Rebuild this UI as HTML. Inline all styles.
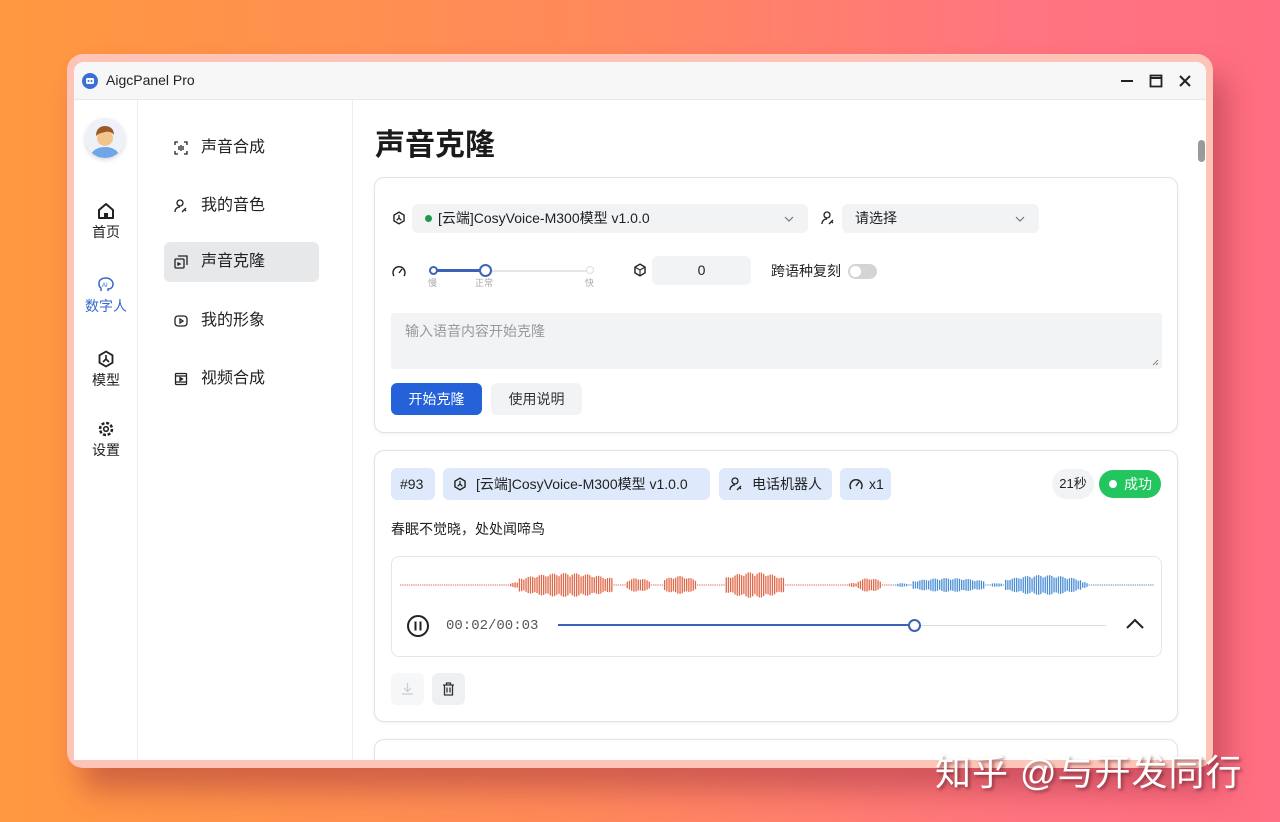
<!DOCTYPE html>
<html><head><meta charset="utf-8">
<style>
*{box-sizing:border-box;margin:0;padding:0}
body{width:1280px;height:822px;overflow:hidden;position:relative;font-family:"Liberation Sans","Noto Sans CJK SC",sans-serif;background:linear-gradient(90deg,#ff9840 0%,#ff8a5a 45%,#ff7480 80%,#ff6e82 100%);color:#222}
.frame{position:absolute;left:67px;top:54px;width:1146px;height:714px;border-radius:16px;background:#ffc4b8;box-shadow:14px 22px 30px rgba(150,40,60,.45)}
.win{position:absolute;left:74px;top:62px;width:1132px;height:698px;background:#fff;border-radius:10px 10px 0 0;overflow:hidden}
.title{position:absolute;left:0;top:0;width:100%;height:38px;background:#f7f7f8;border-bottom:1px solid #e8e8e8}
.title .name{position:absolute;left:32px;top:10px;font-size:14px;color:#222}
.rail{position:absolute;left:0;top:38px;width:64px;bottom:0;border-right:1px solid #ececec}
.rail .it{position:absolute;width:64px;text-align:center;font-size:14px;color:#222}
.rail svg{display:block;margin:0 auto 2px}
.side{position:absolute;left:64px;top:38px;width:215px;bottom:0;border-right:1px solid #ececec}
.side .m{position:absolute;left:26px;width:155px;height:40px;border-radius:6px;font-size:16px;line-height:40px;padding-left:37px;color:#222}
.side .m svg{position:absolute;left:10px;top:13px}
.side .m.on{background:#e7e8ea}
.main{position:absolute;left:279px;top:38px;right:0;bottom:0}
h1{position:absolute;left:22px;top:20px;font-size:30px;font-weight:700;color:#1a1a1a}
.card{position:absolute;left:21px;width:804px;border:1px solid #e3e3e3;border-radius:10px;background:#fff;box-shadow:0 1px 3px rgba(0,0,0,.06)}
.sel{position:absolute;height:29px;background:#f2f3f5;border-radius:6px;font-size:14px;line-height:29px;color:#222}
.tag{position:absolute;top:17px;height:32px;background:#deeafb;border-radius:6px;font-size:14px;line-height:32px;padding:0 9px;color:#222;white-space:nowrap}
.ic{position:absolute}
.sb{position:absolute;right:1px;top:40px;width:7px;height:22px;background:#9a9a9a;border-radius:4px}
.wm{position:absolute;left:935px;top:744px;font-size:36px;color:#fff;text-shadow:2px 2px 3px rgba(90,30,40,.6);letter-spacing:1px}
</style></head><body>
<div class="frame"></div>
<div class="win">
 <div class="title">
  <svg style="position:absolute;left:8px;top:11px" width="16" height="16" viewBox="0 0 16 16"><circle cx="8" cy="8" r="8" fill="#3b6fd8"/><rect x="4" y="5" width="8" height="6" rx="1.5" fill="#fff"/><circle cx="6.5" cy="8" r="1" fill="#3b6fd8"/><circle cx="9.5" cy="8" r="1" fill="#3b6fd8"/></svg>
  <div class="name">AigcPanel Pro</div>
  <svg style="position:absolute;left:1046px;top:12px" width="14" height="14"><line x1="1" y1="7" x2="13" y2="7" stroke="#222" stroke-width="2"/></svg>
  <svg style="position:absolute;left:1075px;top:12px" width="14" height="14"><rect x="1.5" y="1.5" width="11" height="11" fill="none" stroke="#222" stroke-width="1.8"/><line x1="1" y1="4" x2="13" y2="4" stroke="#222" stroke-width="2"/></svg>
  <svg style="position:absolute;left:1104px;top:12px" width="14" height="14"><path d="M2 2L12 12M12 2L2 12" stroke="#222" stroke-width="2"/></svg>
 </div>
 <div class="rail">
  <div style="position:absolute;left:11px;top:18px;width:40px;height:40px;border-radius:50%;background:#eef2f8;box-shadow:0 2px 5px rgba(0,0,0,.15);overflow:hidden">
   <svg width="40" height="40" viewBox="0 0 40 40"><ellipse cx="20" cy="38" rx="14" ry="9" fill="#6fa6e8"/><circle cx="20" cy="20" r="8" fill="#f3c58c"/><path d="M11 18c0-7 4-10 9-10s9 3 9 9c-2-3-6-4-9-3-3 1-6 1-9 4z" fill="#9a5a2a"/></svg>
  </div>
  <div class="it" style="top:102px"><svg width="18" height="18" viewBox="0 0 18 18"><path d="M2 8L9 2l7 6v8H2z" fill="none" stroke="#222" stroke-width="2" stroke-linejoin="round"/><rect x="7" y="11" width="4" height="5" fill="#222"/></svg>首页</div>
  <div class="it" style="top:176px;color:#3568cc"><svg width="18" height="18" viewBox="0 0 18 18"><path d="M4 15v-3c-2-1-2-3-2-5 0-3 3-5 7-5s7 3 7 6c0 4-3 5-5 5v2" fill="none" stroke="#3568cc" stroke-width="1.5"/><text x="5" y="11" font-size="6" fill="#3568cc" font-family="Liberation Sans">AI</text></svg>数字人</div>
  <div class="it" style="top:250px"><svg width="18" height="18" viewBox="0 0 18 18"><path d="M9 1.5l6.5 3.8v7.4L9 16.5 2.5 12.7V5.3z" fill="none" stroke="#222" stroke-width="1.8"/><path d="M9 5v4l-3 3M9 9l3 3" stroke="#222" stroke-width="1.6" fill="none"/></svg>模型</div>
  <div class="it" style="top:320px"><svg width="18" height="18" viewBox="0 0 18 18"><circle cx="9" cy="9" r="6" fill="none" stroke="#222" stroke-width="2.5" stroke-dasharray="3 1.7"/><circle cx="9" cy="9" r="2.3" fill="none" stroke="#222" stroke-width="1.6"/></svg>设置</div>
 </div>
 <div class="side">
  <div class="m" style="top:28px"><svg width="14" height="14" viewBox="0 0 14 14" fill="none" stroke="#222" stroke-width="1.3"><path d="M1 4V1h3M10 1h3v3M13 10v3h-3M4 13H1v-3"/><path d="M5 5v4M7 4v6M9 5v4"/></svg>声音合成</div>
  <div class="m" style="top:86px"><svg width="14" height="14" viewBox="0 0 14 14" fill="none" stroke="#222" stroke-width="1.3"><circle cx="6" cy="4" r="3"/><path d="M1 13c0-3 2-5 5-5M8 13l4-4M10 10l2 2"/></svg>我的音色</div>
  <div class="m on" style="top:142px"><svg width="14" height="14" viewBox="0 0 14 14" fill="none" stroke="#222" stroke-width="1.3"><rect x="1" y="4" width="9" height="9" rx="1"/><path d="M4 1h9v9"/><path d="M4 8l2 1-2 1z" fill="#222"/></svg>声音克隆</div>
  <div class="m" style="top:201px"><svg width="14" height="14" viewBox="0 0 14 14" fill="none" stroke="#222" stroke-width="1.3"><rect x="1" y="2" width="12" height="10" rx="3"/><path d="M6 5l3 2-3 2z"/></svg>我的形象</div>
  <div class="m" style="top:259px"><svg width="14" height="14" viewBox="0 0 14 14" fill="none" stroke="#222" stroke-width="1.3"><rect x="1.5" y="1.5" width="11" height="11" rx="1"/><path d="M1.5 4h11M1.5 10h11"/><path d="M6 5.5l2.5 1.5L6 8.5z" fill="#222"/></svg>视频合成</div>
 </div>
 <div class="main">
  <h1>声音克隆</h1>
  <div class="card" style="top:77px;height:256px">
   <svg class="ic" style="left:17px;top:33px" width="14" height="14" viewBox="0 0 18 18"><path d="M9 1.5l6.5 3.8v7.4L9 16.5 2.5 12.7V5.3z" fill="none" stroke="#222" stroke-width="1.8"/><path d="M9 5v4l-3 3M9 9l3 3" stroke="#222" stroke-width="1.6" fill="none"/></svg>
   <div class="sel" style="left:37px;top:26px;width:396px;padding-left:26px"><span style="position:absolute;left:13px;top:11px;width:7px;height:7px;border-radius:50%;background:#1e9b4a"></span>[云端]CosyVoice-M300模型 v1.0.0<svg style="position:absolute;right:14px;top:11px" width="10" height="8"><path d="M1 2l4 4 4-4" fill="none" stroke="#777" stroke-width="1.2"/></svg></div>
   <svg class="ic" style="left:446px;top:33px" width="14" height="14" viewBox="0 0 14 14" fill="none" stroke="#222" stroke-width="1.3"><circle cx="6" cy="4" r="3"/><path d="M1 13c0-3 2-5 5-5M8 13l4-4M10 10l2 2"/></svg>
   <div class="sel" style="left:467px;top:26px;width:197px;padding-left:13px">请选择<svg style="position:absolute;right:14px;top:11px" width="10" height="8"><path d="M1 2l4 4 4-4" fill="none" stroke="#777" stroke-width="1.2"/></svg></div>
   <svg class="ic" style="left:17px;top:86px" width="14" height="14" viewBox="0 0 14 14" fill="none" stroke="#222" stroke-width="1.4"><path d="M2 12A6 6 0 1 1 12 12"/><path d="M7 9l3-4"/></svg>
   <div style="position:absolute;left:58px;top:92px;width:158px;height:2px;background:#e6e6e6"></div>
   <div style="position:absolute;left:58px;top:91px;width:52px;height:3px;background:#3a63b8"></div>
   <div style="position:absolute;left:54px;top:88px;width:9px;height:9px;border-radius:50%;border:2px solid #3a63b8;background:#fff"></div>
   <div style="position:absolute;left:104px;top:86px;width:13px;height:13px;border-radius:50%;border:2px solid #3a63b8;background:#fff"></div>
   <div style="position:absolute;left:211px;top:88px;width:8px;height:8px;border-radius:50%;border:1px solid #ddd;background:#fff"></div>
   <div style="position:absolute;left:53px;top:98px;font-size:9px;color:#aaa">慢</div>
   <div style="position:absolute;left:100px;top:98px;font-size:9px;color:#aaa">正常</div>
   <div style="position:absolute;left:210px;top:98px;font-size:9px;color:#aaa">快</div>
   <svg class="ic" style="left:258px;top:85px" width="14" height="14" viewBox="0 0 18 18"><path d="M9 1.5l6.5 3.8v7.4L9 16.5 2.5 12.7V5.3z" fill="none" stroke="#222" stroke-width="1.8"/><path d="M2.5 5.3L9 9l6.5-3.7M9 9v7" stroke="#222" stroke-width="1.4" fill="none"/></svg>
   <div class="sel" style="left:277px;top:78px;width:99px;text-align:center">0</div>
   <div style="position:absolute;left:396px;top:83px;font-size:14px">跨语种复刻</div>
   <div style="position:absolute;left:473px;top:86px;width:29px;height:15px;border-radius:8px;background:#d4d4d6"><div style="position:absolute;left:2px;top:2px;width:11px;height:11px;border-radius:50%;background:#fff"></div></div>
   <div style="position:absolute;left:16px;top:135px;width:771px;height:56px;background:#f2f3f5;border-radius:3px;font-size:14px;color:#999;padding:8px 14px">输入语音内容开始克隆<svg style="position:absolute;right:3px;bottom:3px" width="7" height="7"><path d="M6 1L1 6M6 4L4 6" stroke="#888"/></svg></div>
   <div style="position:absolute;left:16px;top:205px;width:91px;height:32px;background:#2562d9;border-radius:6px;color:#fff;font-size:14px;line-height:32px;text-align:center">开始克隆</div>
   <div style="position:absolute;left:116px;top:205px;width:91px;height:32px;background:#f2f3f5;border-radius:6px;color:#333;font-size:14px;line-height:32px;text-align:center">使用说明</div>
  </div>
  <div class="card" style="top:350px;height:272px">
   <div class="tag" style="left:16px;width:44px">#93</div>
   <div class="tag" style="left:68px;width:267px;padding-left:33px"><svg style="position:absolute;left:10px;top:9px" width="14" height="14" viewBox="0 0 18 18"><path d="M9 1.5l6.5 3.8v7.4L9 16.5 2.5 12.7V5.3z" fill="none" stroke="#222" stroke-width="1.8"/><path d="M9 5v4l-3 3M9 9l3 3" stroke="#222" stroke-width="1.6" fill="none"/></svg>[云端]CosyVoice-M300模型 v1.0.0</div>
   <div class="tag" style="left:344px;width:113px;padding-left:33px"><svg style="position:absolute;left:10px;top:9px" width="14" height="14" viewBox="0 0 14 14" fill="none" stroke="#222" stroke-width="1.3"><circle cx="6" cy="4" r="3"/><path d="M1 13c0-3 2-5 5-5M8 13l4-4M10 10l2 2"/></svg>电话机器人</div>
   <div class="tag" style="left:465px;width:51px;padding-left:29px"><svg style="position:absolute;left:9px;top:9px" width="14" height="14" viewBox="0 0 14 14" fill="none" stroke="#222" stroke-width="1.4"><path d="M2 12A6 6 0 1 1 12 12"/><path d="M7 9l3-4"/></svg>x1</div>
   <div style="position:absolute;left:677px;top:18px;width:42px;height:30px;border-radius:15px;background:#f2f3f5;font-size:13px;line-height:30px;text-align:center">21秒</div>
   <div style="position:absolute;left:724px;top:19px;width:62px;height:28px;border-radius:14px;background:#22c55e;color:#fff;font-size:14px;line-height:28px;padding-left:25px"><span style="position:absolute;left:10px;top:10px;width:8px;height:8px;border-radius:50%;background:#fff"></span>成功</div>
   <div style="position:absolute;left:16px;top:68px;font-size:14px">春眠不觉晓，处处闻啼鸟</div>
   <div style="position:absolute;left:16px;top:105px;width:771px;height:101px;border:1px solid #e6e6e6;border-radius:8px">
    <svg id="wave" style="position:absolute;left:0;top:8px" width="769" height="40"></svg>
    <svg style="position:absolute;left:14px;top:57px" width="24" height="24"><circle cx="12" cy="12" r="10" fill="none" stroke="#222" stroke-width="2"/><rect x="8.5" y="7.5" width="2" height="9" fill="#222"/><rect x="13.5" y="7.5" width="2" height="9" fill="#222"/></svg>
    <div style="position:absolute;left:54px;top:61px;font-family:'Liberation Mono',monospace;font-size:14px;color:#555">00:02/00:03</div>
    <div style="position:absolute;left:166px;top:68px;width:548px;height:1px;background:#ddd"></div>
    <div style="position:absolute;left:166px;top:67px;width:356px;height:2px;background:#3a63b8"></div>
    <div style="position:absolute;left:516px;top:62px;width:13px;height:13px;border-radius:50%;border:2px solid #3a63b8;background:#fff"></div>
    <svg style="position:absolute;left:733px;top:60px" width="20" height="14"><path d="M2 11l8-8 8 8" fill="none" stroke="#222" stroke-width="2"/></svg>
   </div>
   <div style="position:absolute;left:16px;top:222px;width:33px;height:32px;border-radius:6px;background:#f6f7f8"><svg style="position:absolute;left:10px;top:9px" width="13" height="13"><path d="M6.5 1v8M3 6l3.5 3.5L10 6M1 12h11" fill="none" stroke="#ccc" stroke-width="1.2"/></svg></div>
   <div style="position:absolute;left:57px;top:222px;width:33px;height:32px;border-radius:6px;background:#eef0f2"><svg style="position:absolute;left:10px;top:9px" width="13" height="14"><path d="M1 3h11M4.5 3V1h4v2M2.5 3v10h8V3M5 5.5v5M8 5.5v5" fill="none" stroke="#333" stroke-width="1.3"/></svg></div>
  </div>
  <div class="card" style="top:639px;height:80px"></div>
  <div class="sb"></div>
 </div>
</div>
<div class="wm">知乎 @与开发同行</div>
<script>
(function(){var s=document.getElementById('wave'),h='',c=20;
var reg=[[118,126,3],[126,221,12],[233,257,7],[270,303,9],[332,391,13],[455,465,2],[465,488,7],[505,515,2],[519,593,7],[598,610,2],[613,688,10],[688,695,3]];
for(var x=8;x<762;x+=2.2){var a=0.5;for(var i=0;i<reg.length;i++){var r=reg[i];if(x>=r[0]&&x<=r[1]){var t=(x-r[0])/(r[1]-r[0]);a=Math.max(a,r[2]*(0.55+0.45*Math.sin(t*Math.PI))*(0.7+0.3*Math.abs(Math.sin(x*1.7))));}}
var col=x<500?'#e2684a':'#4a8fd6';h+='<rect x="'+x.toFixed(1)+'" y="'+(c-a).toFixed(1)+'" width="1.3" height="'+(2*a).toFixed(1)+'" fill="'+col+'"/>';}
s.innerHTML=h;})();
</script>
</body></html>
